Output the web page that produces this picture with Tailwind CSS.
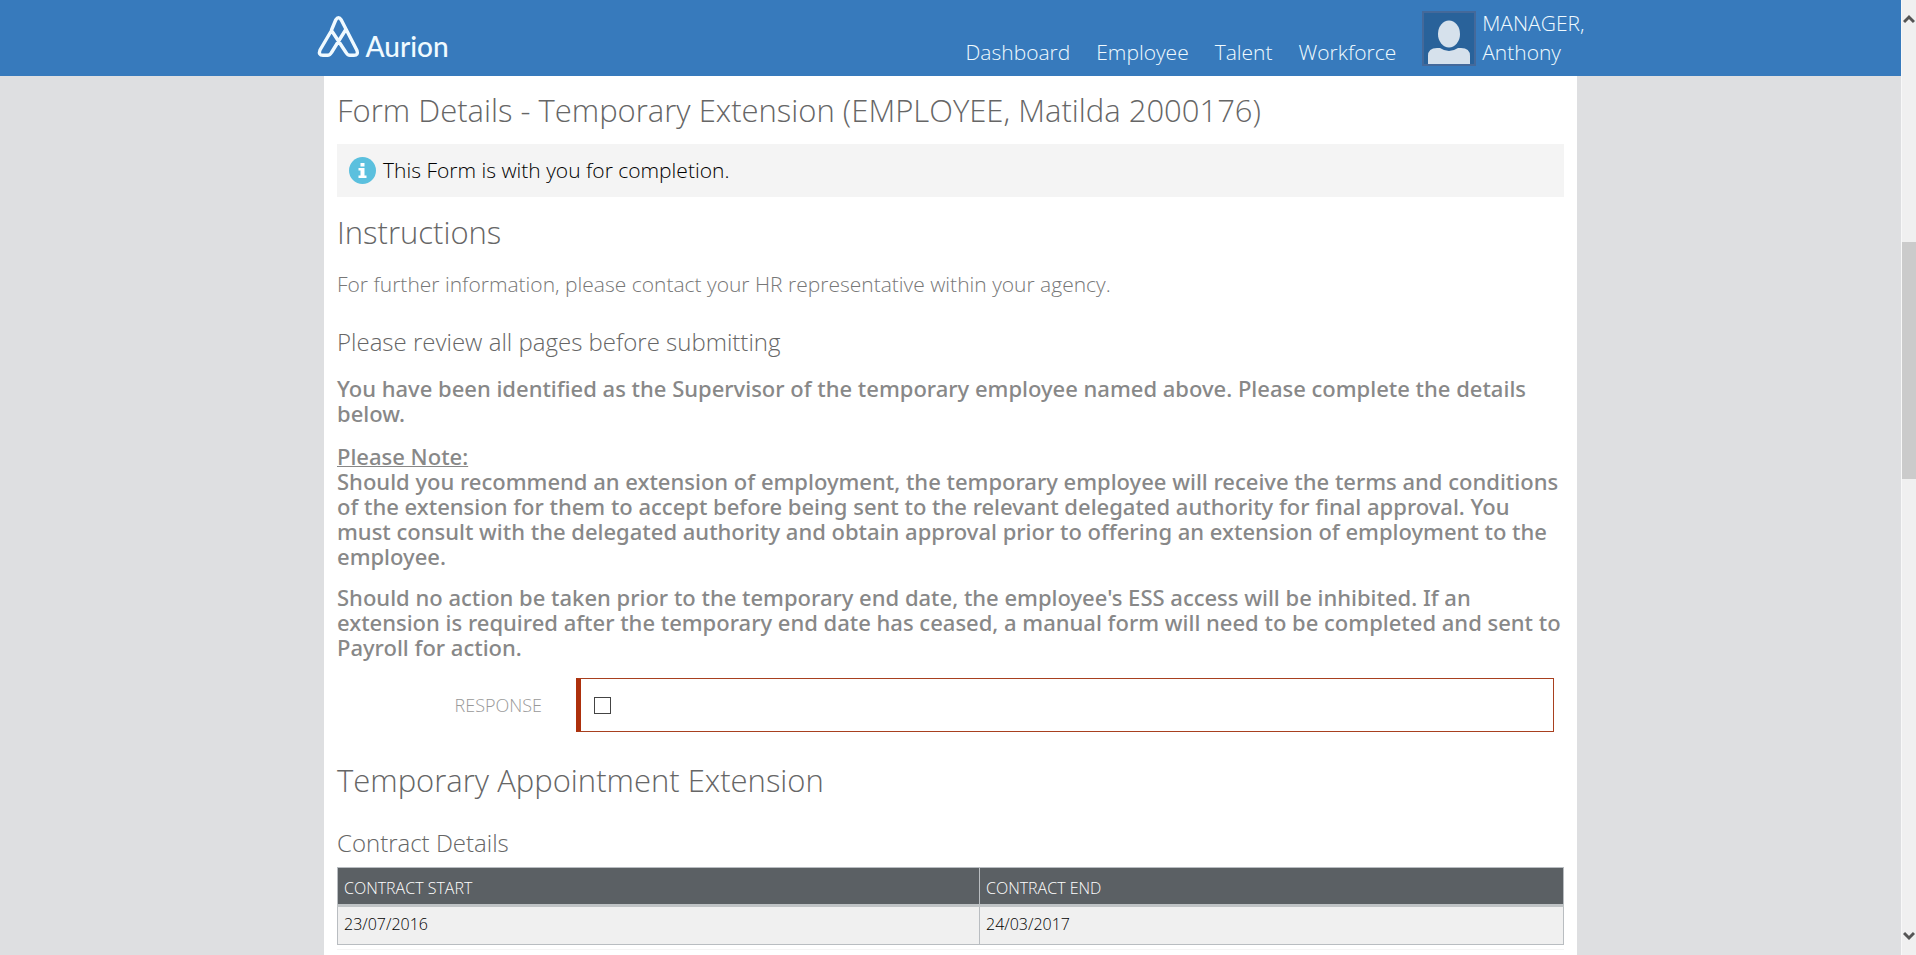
<!DOCTYPE html>
<html lang="en">
<head>
<meta charset="utf-8">
<meta name="viewport" content="width=device-width, initial-scale=1">
<title>Form Details - Temporary Extension</title>
<script src="https://cdn.jsdelivr.net/npm/@tailwindcss/browser@4"></script>
</head>
<body class="flex h-screen overflow-hidden bg-[#dedfe1] font-['Open_Sans',sans-serif] font-light text-[#666]">
<div class="min-w-0 flex-1 overflow-hidden">
  <header class="h-[76px] bg-[#377abc] text-[#f0faff]">
    <div class="mx-auto flex h-full max-w-[1268px] items-start justify-between">
      <a href="#" class="flex items-end pt-4">
        <svg class="h-[42px] w-[43px]" viewBox="0 0 43 42" fill="none" stroke="currentColor" stroke-width="3.4" stroke-linejoin="round" stroke-linecap="round" aria-hidden="true">
          <path d="M14.5 14 L18.7 4 Q21.5 -0.5 24.3 4 L40 34.500 Q41.500 39.300 37 39.300 L33 39.300 Q30.500 39.300 29 36.500 L14.500 14.500 L3 34 Q1 39.300 6 39.300 L10.500 39.300 Q13 39.300 14.500 36.500 L28.500 14"/>
        </svg>
        <span class="ml-[6px] font-['Lato',sans-serif] text-[28px] leading-[24px] font-medium">Aurion</span>
      </a>
      <div class="flex">
        <nav class="mr-[26px] flex gap-[26px] pt-[38px] text-[21px] leading-[29px]">
          <a href="#">Dashboard</a>
          <a href="#">Employee</a>
          <a href="#">Talent</a>
          <a href="#">Workforce</a>
        </nav>
        <a href="#" class="flex gap-[6px] pt-[9px] text-[21px] leading-[29px]">
          <svg class="mt-[2px] h-[55px] w-[54px]" viewBox="0 0 54 55" aria-hidden="true">
            <rect x="1" y="1" width="52" height="53" fill="#29629a" stroke="#44699a" stroke-width="2"/>
            <path d="M6 53 V45 Q6 37 15 37 H18 Q27 43 36 37 H39 Q48 37 48 45 V53 Z" fill="#d6e1ec"/>
            <ellipse cx="27" cy="23" rx="11" ry="13.500" fill="#d6e1ec"/>
          </svg>
          <span>MANAGER,<br>Anthony</span>
        </a>
      </div>
    </div>
  </header>
  <main class="mx-auto min-h-screen max-w-[1253px] bg-white px-[13px] pt-3">
    <h1 class="text-[31px] leading-[44px]">Form Details - Temporary Extension (EMPLOYEE, Matilda 2000176)</h1>
    <div role="status" class="mt-3 flex h-[53px] items-center gap-[7px] bg-[#f4f4f4] px-3 text-[21px] text-black">
      <svg class="h-[27px] w-[27px]" viewBox="0 0 27 27" aria-hidden="true">
        <circle cx="13.500" cy="13.500" r="13.500" fill="#5bc0de"/>
        <path d="M11.500 6 h4 v3.500 h-4 z M9.500 11 h6 v7.500 h2 v2.500 h-8 v-2.500 h2 v-5 h-2 z" fill="#fff"/>
      </svg>
      <span>This Form is with you for completion.</span>
    </div>
    <h2 class="mt-[13px] text-[31px] leading-[44px]">Instructions</h2>
    <p class="mt-4 text-[21px] leading-[28px] text-[#777]">For further information, please contact your HR representative within your agency.</p>
    <h3 class="mt-7 text-[24px] leading-[32px]">Please review all pages before submitting</h3>
    <div class="font-['Noto_Sans',sans-serif] text-[22px] leading-[25px] font-medium text-[#888]">
      <p class="mt-[18px]">You have been identified as the Supervisor of the temporary employee named above. Please complete the details below.</p>
      <p class="mt-[18px] underline decoration-1">Please Note:</p>
      <p>Should you recommend an extension of employment, the temporary employee will receive the terms and conditions of the extension for them to accept before being sent to the relevant delegated authority for final approval. You must consult with the delegated authority and obtain approval prior to offering an extension of employment to the employee.</p>
      <p class="mt-4">Should no action be taken prior to the temporary end date, the employee's ESS access will be inhibited. If an extension is required after the temporary end date has ceased, a manual form will need to be completed and sent to Payroll for action.</p>
    </div>
    <div class="mt-[18px] flex items-center pr-[10px]">
      <label for="response" class="w-[205px] text-right text-[18px] text-[#999]">RESPONSE</label>
      <div class="ml-[34px] flex h-[54px] flex-1 items-center border border-l-[5px] border-[#a8401f] border-l-[#ad300c] pl-[13px]">
        <input id="response" type="checkbox" class="h-[17px] w-[17px] appearance-none border border-[#444] bg-white">
      </div>
    </div>
    <h2 class="mt-[26px] text-[31px] leading-[44px]">Temporary Appointment Extension</h2>
    <h3 class="mt-[25px] text-[24px] leading-[32px]">Contract Details</h3>
    <table class="mt-2 w-full table-fixed border-collapse border border-[#b9bdc1] text-left text-[16px] leading-[24px]">
      <colgroup><col class="w-[642px]"><col></colgroup>
      <thead>
        <tr class="h-[38px] border-b-[3px] border-[#bfc3c5] bg-[#5b6064] text-white">
          <th scope="col" class="border-r border-[#b9bdc1] px-[6px] pt-1 font-light">CONTRACT START</th>
          <th scope="col" class="px-[6px] pt-1 font-light">CONTRACT END</th>
        </tr>
      </thead>
      <tbody>
        <tr class="h-[39px] bg-[#f0f0f0] text-black">
          <td class="border-r border-[#b9bdc1] px-[6px] pb-1">23/07/2016</td>
          <td class="px-[6px] pb-1">24/03/2017</td>
        </tr>
      </tbody>
    </table>
    <hr class="mt-1 border-[#f4f4f4]">
  </main>
</div>
<div class="flex w-[15px] shrink-0 flex-col items-center border-l border-[#f8f8f8] bg-[#f0f0f0]" aria-hidden="true">
  <svg class="mt-[14px] h-[10px] w-3" viewBox="0 0 12 10" fill="none" stroke="#555" stroke-width="3"><path d="M1 8 L6 3 L11 8"/></svg>
  <div class="mt-[218px] h-[237px] w-full bg-[#cbcbcb]"></div>
  <svg class="mt-auto mb-[14px] h-[10px] w-3" viewBox="0 0 12 10" fill="none" stroke="#555" stroke-width="3"><path d="M1 2 L6 7 L11 2"/></svg>
</div>
</body>
</html>
